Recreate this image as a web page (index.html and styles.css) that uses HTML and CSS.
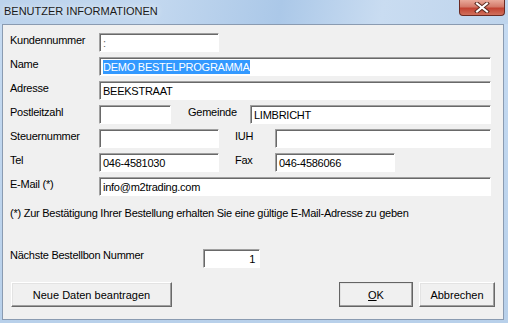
FILE: index.html
```html
<!DOCTYPE html>
<html lang="de">
<head>
  <meta charset="UTF-8">
  <title>Benutzer Informationen</title>
  <link rel="stylesheet" href="styles.css">
</head>
<body>
  <div class="window">
    <div class="titlebar">
      <span class="title">BENUTZER INFORMATIONEN</span>
      <div class="close">
        <svg width="16" height="11" viewBox="0 0 16 11">
          <path d="M3 1.5 L13 9.5 M13 1.5 L3 9.5" stroke="#5a2a20" stroke-width="4" stroke-linecap="square"/>
          <path d="M3 1.5 L13 9.5 M13 1.5 L3 9.5" stroke="#ffffff" stroke-width="2" stroke-linecap="square"/>
        </svg>
      </div>
    </div>

    <div class="client">
      <div class="fields">
        <div class="row">
          <label class="lbl">Kundennummer</label>
          <div class="field w119"><span class="dim">:</span></div>
        </div>
        <div class="row">
          <label class="lbl">Name</label>
          <div class="field w392"><span class="selected">DEMO BESTELPROGRAMMA</span></div>
        </div>
        <div class="row">
          <label class="lbl">Adresse</label>
          <div class="field w392">BEEKSTRAAT</div>
        </div>
        <div class="row">
          <label class="lbl">Postleitzahl</label>
          <div class="field w71"></div>
          <label class="lbl2 gemeinde">Gemeinde</label>
          <div class="field w241">LIMBRICHT</div>
        </div>
        <div class="row">
          <label class="lbl">Steuernummer</label>
          <div class="field w119"></div>
          <label class="lbl2 short">IUH</label>
          <div class="field w216"></div>
        </div>
        <div class="row">
          <label class="lbl">Tel</label>
          <div class="field w119">046-4581030</div>
          <label class="lbl2 short">Fax</label>
          <div class="field w119">046-4586066</div>
        </div>
        <div class="row">
          <label class="lbl">E-Mail (*)</label>
          <div class="field w392">info@m2trading.com</div>
        </div>
      </div>

      <p class="note">(*) Zur Bestätigung Ihrer Bestellung erhalten Sie eine gültige E-Mail-Adresse zu geben</p>

      <div class="order-row">
        <label class="lbl order-lbl">Nächste Bestellbon Nummer</label>
        <div class="field w57 num">1</div>
      </div>

      <div class="actions">
        <button class="btn wide">Neue Daten beantragen</button>
        <div class="spacer"></div>
        <button class="btn ok default"><u>O</u>K</button>
        <button class="btn cancel">Abbrechen</button>
      </div>
    </div>
  </div>
</body>
</html>
```

FILE: styles.css
```css
body {
  margin: 0;
  font-family: "Liberation Sans", Arial, sans-serif;
  font-size: 11px;
  color: #000;
}
.window {
  width: 508px;
  height: 323px;
  display: flex;
  flex-direction: column;
  background: linear-gradient(to bottom, #c6dbf2, #b8d0ea);
  box-sizing: border-box;
}
.titlebar {
  height: 24px;
  display: flex;
  align-items: flex-start;
  background: linear-gradient(100deg, #bcd3ec 0%, #c3d8ef 30%, #abc8e8 55%, #c9dcf1 75%, #bed4ec 100%);
}
.title {
  font-size: 11px;
  color: #1a1a1a;
  padding: 5px 0 0 4px;
  text-shadow: 0 0 6px rgba(255,255,255,0.9);
}
.close {
  margin-left: auto;
  margin-right: 3px;
  width: 46px;
  height: 16px;
  box-sizing: border-box;
  border: 1px solid #6b2a22;
  border-top: none;
  border-radius: 0 0 4px 4px;
  background: linear-gradient(to bottom, #e9a99a 0%, #d47a6a 45%, #c24332 55%, #d0705c 100%);
  display: flex;
  align-items: center;
  justify-content: center;
}
.client {
  flex: 1;
  margin: 0 4px 3px 2px;
  border: 1px solid #8a9bb1;
  background: #f0f0f0;
  padding: 8px 8px 12px 7px;
  display: flex;
  flex-direction: column;
  letter-spacing: -0.25px;
}
.fields {
  display: flex;
  flex-direction: column;
  gap: 5px;
}
.row {
  display: flex;
  align-items: flex-start;
  height: 19px;
}
.lbl {
  width: 89px;
  margin-top: 1px;
  flex-shrink: 0;
}
.lbl2 {
  margin-top: 1px;
  flex-shrink: 0;
}
.gemeinde {
  margin-left: 17px;
  width: 62px;
}
.short {
  margin-left: 16px;
  width: 40px;
}
.field {
  height: 19px;
  box-sizing: border-box;
  background: #fff;
  border: 1px solid;
  border-color: #a0a0a0 #fff #fff #a0a0a0;
  box-shadow: inset 1px 1px 0 #696969;
  padding: 3px 0 0 3px;
  line-height: 13px;
  white-space: nowrap;
  overflow: hidden;
  position: relative;
}
.field::after {
  content: "";
  position: absolute;
  left: -1px;
  top: -1px;
  right: -1px;
  bottom: -1px;
  border-right: 1px solid #e3e3e3;
  border-bottom: 1px solid #e3e3e3;
  pointer-events: none;
}
.w57 { width: 57px; }
.w71 { width: 72px; }
.w119 { width: 120px; }
.w216 { width: 216px; }
.w241 { width: 241px; }
.w392 { width: 392px; }
.dim {
  color: #666;
}
.selected {
  background: #3399ff;
  color: #fff;
  padding: 1px 0;
}
.note {
  margin: 11px 0 0 0;
  line-height: 13px;
}
.order-row {
  display: flex;
  align-items: flex-start;
  margin-top: 29px;
}
.order-lbl {
  width: 193px;
  margin-top: 0;
}
.num {
  text-align: right;
  padding: 3px 4px 0 0;
  height: 19px;
}
.actions {
  display: flex;
  margin-top: auto;
  gap: 6px;
}
.spacer {
  flex: 1;
}
.btn {
  height: 25px;
  box-sizing: border-box;
  font-family: "Liberation Sans", Arial, sans-serif;
  font-size: 11px;
  letter-spacing: 0;
  color: #000;
  background: #f0f0f0;
  border: 1px solid;
  border-color: #fff #696969 #696969 #fff;
  box-shadow: inset -1px -1px 0 #a0a0a0, inset 1px 1px 0 #e3e3e3;
  padding: 0;
}
.wide {
  width: 161px;
  margin-left: 1px;
}
.ok {
  width: 74px;
}
.default {
  outline: 1px solid #646464;
  outline-offset: -1px;
  border-color: #fff #404040 #404040 #fff;
}
.cancel {
  width: 76px;
}
```
